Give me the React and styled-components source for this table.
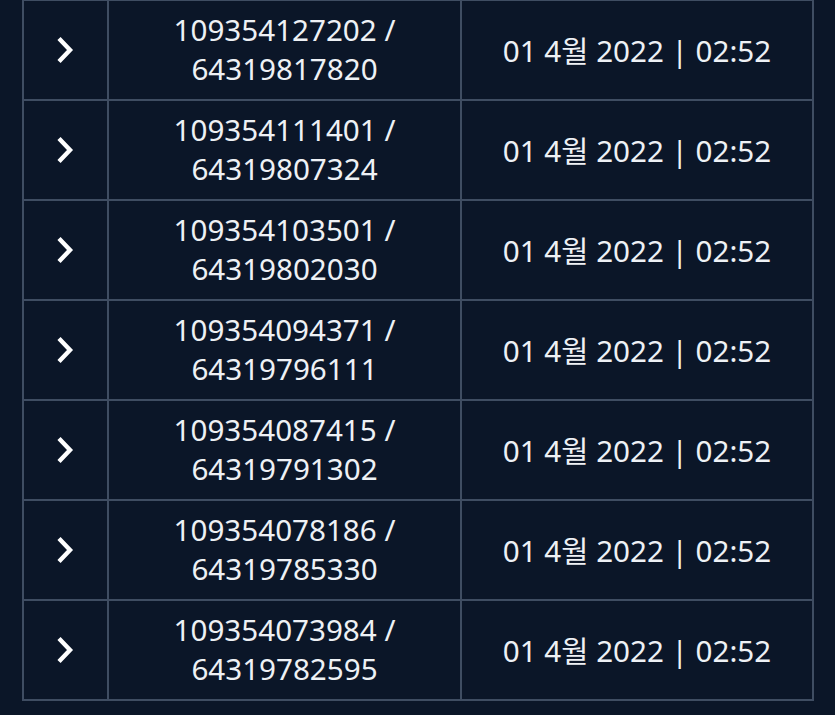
import styled, { createGlobalStyle } from "styled-components";

const GlobalStyle = createGlobalStyle`
  body {
    margin: 0;
    background: #0b1628;
    font-family: "Noto Sans", "Noto Sans CJK KR", sans-serif;
  }
`;

const rows = [
  ["109354127202", "64319817820"],
  ["109354111401", "64319807324"],
  ["109354103501", "64319802030"],
  ["109354094371", "64319796111"],
  ["109354087415", "64319791302"],
  ["109354078186", "64319785330"],
  ["109354073984", "64319782595"],
];

const Page = styled.div`
  height: 715px;
  overflow: hidden;
  padding: 0 21px 0 22px;
  background: #0b1628;
`;

const Table = styled.div`
  display: grid;
  grid-template-columns: 85px 353px 352px;
  border-left: 2px solid #3f4d62;
  border-top: 2px solid #3f4d62;
  margin-top: -1px;
`;

const Cell = styled.div`
  box-sizing: border-box;
  height: 100px;
  border-right: 2px solid #3f4d62;
  border-bottom: 2px solid #3f4d62;
  display: flex;
  align-items: center;
  justify-content: center;
  text-align: center;
  color: #eef1f5;
  font-size: 29.6px;
  line-height: 39px;
  padding-bottom: ${(p) => (p.$pad ? "2px" : "0")};
`;

const Icon = styled.svg`
  display: block;
  width: 20px;
  height: 30px;
  margin-left: -3px;
`;

const Chevron = () => (
  <Icon viewBox="0 0 20 30">
    <polyline
      points="5,3.5 16,15 5,26.5"
      fill="none"
      stroke="#ffffff"
      strokeWidth="4.4"
      strokeLinejoin="miter"
    />
  </Icon>
);

export default function App() {
  return (
    <Page>
      <GlobalStyle />
      <Table>
        {rows.map(([a, b]) => (
          <>
            <Cell key={a + "c"}>
              <Chevron />
            </Cell>
            <Cell key={a + "n"} $pad>
              <div>
                {a} /<br />
                {b}
              </div>
            </Cell>
            <Cell key={a + "d"}>01 4월 2022 | 02:52</Cell>
          </>
        ))}
      </Table>
    </Page>
  );
}
